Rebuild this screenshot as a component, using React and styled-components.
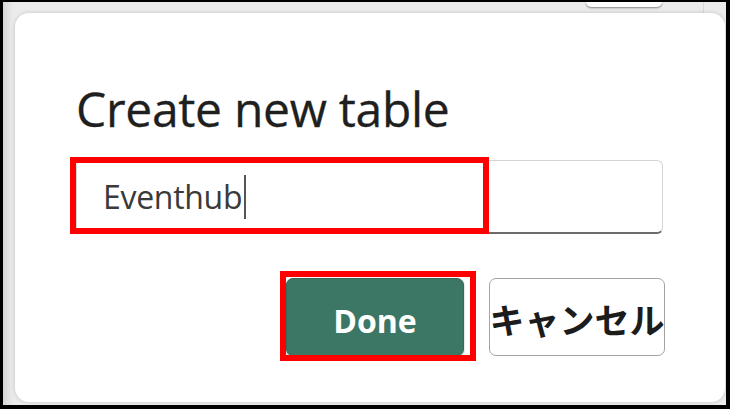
import React from "react";
import styled, { createGlobalStyle } from "styled-components";

const GlobalStyle = createGlobalStyle`
    html, body {
        margin: 0;
        padding: 0;
        background: #ffffff;
        font-family: "Open Sans", "Noto Sans", sans-serif;
    }
`;

const Frame = styled.div`
    width: 730px;
    height: 409px;
    box-sizing: border-box;
    border-style: solid;
    border-color: #000;
    border-width: 2px 4px 4px 3px;
    background: linear-gradient(to right, #d6d6d6 0, #e8e8e8 8px, #ececec 12px, #ececec 100%);
    display: flex;
    flex-direction: column;
    overflow: hidden;
`;

const TopStrip = styled.div`
    height: 11px;
    display: flex;
    align-items: flex-start;
    flex-shrink: 0;
`;

const BehindButton = styled.div`
    margin-left: 583px;
    width: 76px;
    height: 5px;
    background: #fff;
    border-radius: 0 0 6px 6px;
    box-shadow: 0 1px 2px rgba(0, 0, 0, 0.45);
`;

const BehindDivider = styled.div`
    margin-left: 41px;
    width: 1px;
    height: 11px;
    background: #d9d9d9;
`;

const Dialog = styled.div`
    margin-left: 12px;
    width: 710px;
    height: 389px;
    box-sizing: border-box;
    background: #fff;
    border-radius: 14px;
    box-shadow: 0 0 4px rgba(0, 0, 0, 0.18);
    padding: 68px 62px 0 61px;
    display: flex;
    flex-direction: column;
`;

const Title = styled.h1`
    margin: 0;
    font-family: "Open Sans", sans-serif;
    font-weight: 400;
    font-size: 48px;
    line-height: 56px;
    letter-spacing: -0.3px;
    color: #1f1f1f;
    -webkit-text-stroke: 0.3px #1f1f1f;
`;

const InputWrap = styled.div`
    position: relative;
    margin-top: 23px;
`;

const InputBox = styled.div`
    height: 74px;
    box-sizing: border-box;
    border: 1px solid #d4d4d4;
    border-bottom: 2px solid #6c6c6c;
    border-radius: 6px;
    padding-left: 26px;
    display: flex;
    align-items: center;
    font-family: "Open Sans", sans-serif;
    font-size: 32px;
    letter-spacing: -0.3px;
    color: #3a3a3a;
`;

const Caret = styled.span`
    display: inline-block;
    width: 2px;
    height: 44px;
    margin-left: 2px;
    background: #555;
`;

const Highlight = styled.div`
    position: absolute;
    left: ${(p) => p.$left}px;
    top: ${(p) => p.$top}px;
    width: ${(p) => p.$width}px;
    height: ${(p) => p.$height}px;
    box-sizing: border-box;
    border: 6px solid #ff0000;
    pointer-events: none;
`;

const ButtonRow = styled.div`
    margin-top: 44px;
    margin-right: -2px;
    display: flex;
    justify-content: flex-end;
    gap: 25px;
`;

const ButtonSlot = styled.div`
    position: relative;
`;

const Button = styled.button`
    width: ${(p) => (p.$primary ? 178 : 176)}px;
    height: 78px;
    box-sizing: border-box;
    padding: 0;
    border-radius: 7px;
    display: flex;
    align-items: center;
    justify-content: center;
    white-space: nowrap;
    font-weight: 700;
    cursor: pointer;
    ${(p) =>
        p.$primary
            ? `
        background: #3c7766;
        border: 1px solid #35695a;
        color: #fff;
        font-family: "Open Sans", sans-serif;
        font-size: 32px;
        padding-top: 6px;
        box-shadow: 0 1px 2px rgba(0, 0, 0, 0.35);
    `
            : `
        background: #fff;
        border: 1.5px solid #a3a3a3;
        color: #1c1c1c;
        font-family: "Noto Sans CJK JP", "Noto Sans", sans-serif;
        font-size: 35px;
        padding-top: 2px;
    `}
`;

const App = () => {
    return (
        <>
            <GlobalStyle />
            <Frame>
                <TopStrip>
                    <BehindButton />
                    <BehindDivider />
                </TopStrip>
                <Dialog>
                    <Title>Create new table</Title>
                    <InputWrap>
                        <InputBox>
                            Eventhub
                            <Caret />
                        </InputBox>
                        <Highlight $left={-6} $top={-3} $width={419} $height={77} />
                    </InputWrap>
                    <ButtonRow>
                        <ButtonSlot>
                            <Button $primary>Done</Button>
                            <Highlight $left={-6} $top={-7} $width={196} $height={90} />
                        </ButtonSlot>
                        <ButtonSlot>
                            <Button>キャンセル</Button>
                        </ButtonSlot>
                    </ButtonRow>
                </Dialog>
            </Frame>
        </>
    );
};

export default App;
